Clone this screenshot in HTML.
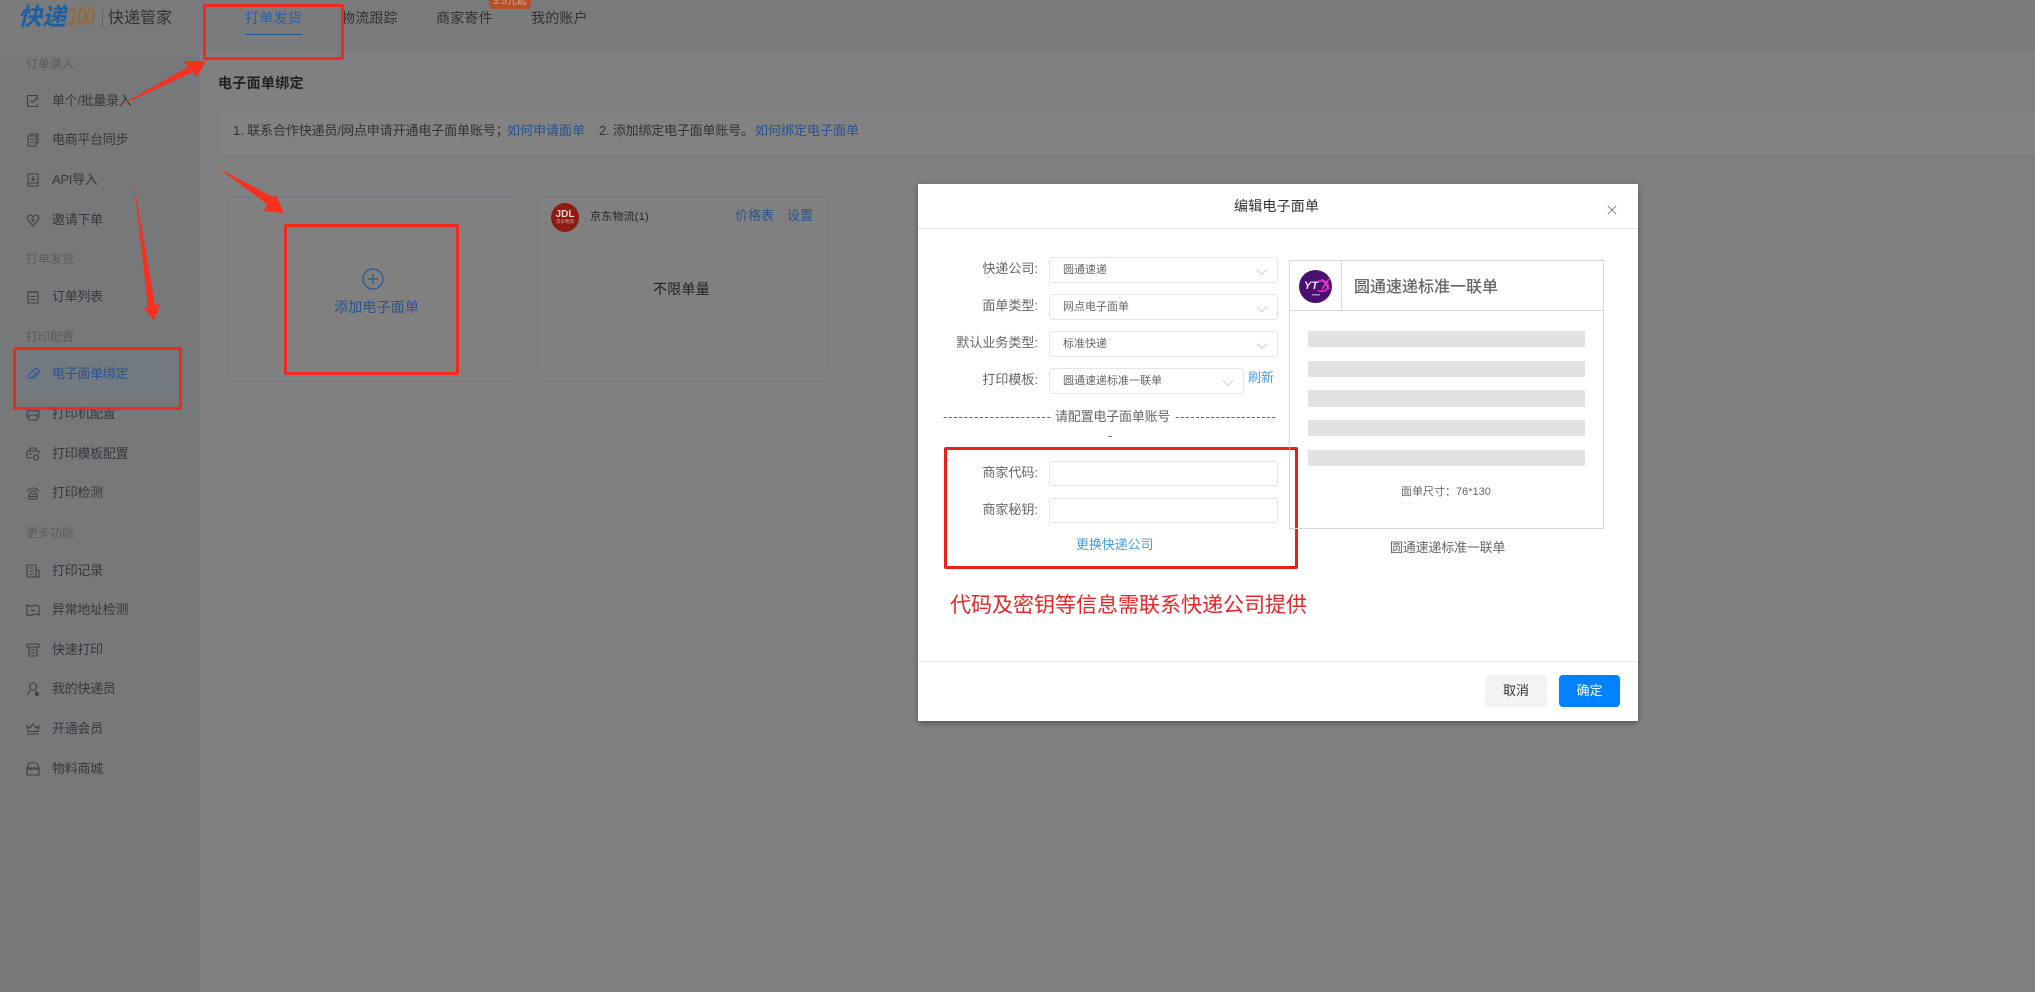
<!DOCTYPE html>
<html lang="zh-CN">
<head>
<meta charset="utf-8">
<title>电子面单绑定</title>
<style>
html,body{margin:0;padding:0;width:2035px;height:992px;overflow:hidden;background:#808080}
body{position:relative;font-family:"Liberation Sans","Noto Sans CJK SC",sans-serif;color:#333}
div,span,svg{position:absolute}
.t{white-space:nowrap;line-height:20px;height:20px}
.side{font-size:13px;color:#36383b;left:52px;letter-spacing:-.3px}
.sec{font-size:12px;color:#5a5c5f;left:26px}
.ic{left:26px;width:14px;height:14px;fill:none;stroke:#3e4043;stroke-width:1.1}
.tab{font-size:14px;color:#333;letter-spacing:.2px}
.blue{color:#27548f}
.box{box-sizing:border-box;border:1px solid #e6e6e6;border-radius:3px;background:#fff}
.lbl{font-size:13px;color:#666;right:997px;text-align:right}
.val{font-size:11px;color:#666;left:1063px}
.chev{width:12px;height:8px;fill:none;stroke:#cfcfcf;stroke-width:1}
.rb{box-sizing:border-box;border:3px solid #f0281e;border-radius:2px}
.bar{left:1308px;width:277px;background:#e2e2e2}
</style>
</head>
<body>
<!-- dimmed page -->
<div style="left:0;top:0;width:2035px;height:54px;background:#7a7b7c"></div>
<div style="left:0;top:54px;width:200px;height:938px;background:#76787a"></div>

<!-- logo -->
<div class="t" style="left:18px;top:6px;height:24px;line-height:24px;font-size:24px;font-weight:bold;font-style:italic;color:#1f5f9f">快递</div>
<div class="t" style="left:68px;top:5px;height:24px;line-height:24px;font-size:25px;font-weight:bold;font-style:italic;color:#8f6c3f;letter-spacing:-2px;transform:scaleX(.72);transform-origin:left center">100</div>
<div style="left:102px;top:10px;width:1px;height:17px;background:#5f6163"></div>
<div class="t" style="left:108px;top:9px;font-size:16px;color:#333">快递管家</div>

<!-- tabs -->
<div class="t tab" style="left:245px;top:8px;color:#2f5f9c">打单发货</div>
<div style="left:245px;top:34px;width:57px;height:1px;background:#27538f"></div>
<div class="t tab" style="left:341px;top:8px">物流跟踪</div>
<div class="t tab" style="left:436px;top:8px">商家寄件</div>
<div class="t tab" style="left:531px;top:8px">我的账户</div>
<div class="t" style="left:489px;top:-3px;width:42px;height:12px;line-height:10px;background:#b5502c;border-radius:0 0 4px 4px;color:#d9a98c;font-size:10px;text-align:center">3.5元起</div>

<!-- sidebar -->
<div style="left:16px;top:352px;width:162px;height:44px;background:#737980"></div>
<div class="t sec" style="top:54px">订单录入</div>
<svg class="ic" style="top:94px" viewBox="0 0 14 14"><path d="M11.500 5.500V1.500h-10v11h10v-2.500M4.500 6.500l2 2 5.500-5.500"/></svg>
<div class="t side" style="top:91px">单个/批量录入</div>
<svg class="ic" style="top:133px" viewBox="0 0 14 14"><path d="M4 3V1h8v9h-2M2 3h8v10H2zM4 6h4M4 9h4"/></svg>
<div class="t side" style="top:130px">电商平台同步</div>
<svg class="ic" style="top:173px" viewBox="0 0 14 14"><path d="M2 1h10v12H2zM2 10h10M7 3v4M5 5.500l2 2 2-2"/></svg>
<div class="t side" style="top:170px">API导入</div>
<svg class="ic" style="top:213px" viewBox="0 0 14 14"><path d="M7 13L1.500 6.500Q1 2 4 2q2 0 3 2 1-2 3-2 3 0 2.500 4.500zM5 6l3 1-2 2"/></svg>
<div class="t side" style="top:210px">邀请下单</div>
<div class="t sec" style="top:249px">打单发货</div>
<svg class="ic" style="top:290px" viewBox="0 0 14 14"><path d="M2 2h10v11H2zM5 1v2M9 1v2M4.500 6.500h5M4.500 9.500h5"/></svg>
<div class="t side" style="top:287px">订单列表</div>
<div class="t sec" style="top:327px">打印配置</div>
<svg class="ic" style="top:367px;stroke:#2a5490" viewBox="0 0 14 14"><path d="M11.500 5L6 10.500a2 2 0 0 1-3-3L9 2a3 3 0 0 1 4 4l-6 6"/></svg>
<div class="t side" style="top:364px;color:#27548f">电子面单绑定</div>
<svg class="ic" style="top:407px" viewBox="0 0 14 14"><path d="M3 4V1h8v3M1 4h12v6h-2M3 10H1V4M3 8h8v5H3z"/></svg>
<div class="t side" style="top:404px">打印机配置</div>
<svg class="ic" style="top:447px" viewBox="0 0 14 14"><path d="M4 4V1h6v3M1 11V4h12v3M1 11h5M3 7h3M10 8a2.500 2.500 0 1 0 .1 0z"/></svg>
<div class="t side" style="top:444px">打印模板配置</div>
<svg class="ic" style="top:486px" viewBox="0 0 14 14"><path d="M1 5Q7 -1 13 5M3.500 6.500Q7 3 10.500 6.500M3 8h8v5H3zM3 10.500h8"/></svg>
<div class="t side" style="top:483px">打印检测</div>
<div class="t sec" style="top:523px">更多功能</div>
<svg class="ic" style="top:564px" viewBox="0 0 14 14"><path d="M1 1h9v12H1zM10 6h3v7h-3M3.500 4h4M3.500 7h4M3.500 10h4"/></svg>
<div class="t side" style="top:561px">打印记录</div>
<svg class="ic" style="top:603px" viewBox="0 0 14 14"><path d="M1 2l4 1.500L9 2l4 1v9l-4-1-4 1.500L1 12zM5 6.500l2 1.500 2-1.500"/></svg>
<div class="t side" style="top:600px">异常地址检测</div>
<svg class="ic" style="top:643px" viewBox="0 0 14 14"><path d="M1 1h12v3H1zM3 4v9h8V4M5 7h4M5 10h4"/></svg>
<div class="t side" style="top:640px">快速打印</div>
<svg class="ic" style="top:682px" viewBox="0 0 14 14"><path d="M7 1a3.500 3.500 0 1 0 .1 0zM1.500 13Q2 9 5 8.500M9 8.500q1.500.5 2 1.500"/><circle cx="11" cy="12" r="1.500" fill="#3e4043"/></svg>
<div class="t side" style="top:679px">我的快递员</div>
<svg class="ic" style="top:722px" viewBox="0 0 14 14"><path d="M1 12h12M2 9.500L1 4l3 2 3-4 3 4 3-2-1 5.500z"/></svg>
<div class="t side" style="top:719px">开通会员</div>
<svg class="ic" style="top:762px" viewBox="0 0 14 14"><path d="M3 1h8l2 5v7H1V6zM1 6h12M1 6Q4 9 7 6q3 3 6 0"/></svg>
<div class="t side" style="top:759px">物料商城</div>

<!-- main content -->
<div class="t" style="left:218px;top:73px;font-size:14px;font-weight:bold;color:#222;letter-spacing:.3px">电子面单绑定</div>
<div style="left:218px;top:108px;width:1830px;height:48px;box-sizing:border-box;background:#828282;border:1px solid #7b7c7c;border-radius:3px;box-shadow:0 1px 2px #777"></div>
<div class="t" style="left:233px;top:121px;font-size:13px;color:#333;letter-spacing:-.1px">1. 联系合作快递员/网点申请开通电子面单账号；</div>
<div class="t blue" style="left:507px;top:121px;font-size:13px">如何申请面单</div>
<div class="t" style="left:599px;top:121px;font-size:13px;color:#333;letter-spacing:-.2px">2. 添加绑定电子面单账号。</div>
<div class="t blue" style="left:755px;top:121px;font-size:13px">如何绑定电子面单</div>

<div style="left:227px;top:197px;width:291px;height:180px;box-sizing:border-box;border:1px solid #6f7b8a;border-radius:4px"></div>
<div style="left:537px;top:197px;width:291px;height:180px;box-sizing:border-box;border:1px solid #76797e;border-radius:4px"></div>
<svg style="left:362px;top:268px;width:22px;height:22px" viewBox="0 0 22 22" fill="none" stroke="#27548f" stroke-width="1.2"><circle cx="11" cy="11" r="10"/><path d="M11 6v10M6 11h10"/></svg>
<div class="t blue" style="left:334px;top:297px;font-size:14px;letter-spacing:.2px">添加电子面单</div>

<svg style="left:551px;top:203px;width:28px;height:29px" viewBox="0 0 28 29"><ellipse cx="14" cy="14.500" rx="14" ry="14.500" fill="#8e1a12"/><text x="14" y="14" font-size="10" font-weight="bold" fill="#e8d9d6" text-anchor="middle" font-family="Liberation Sans,sans-serif">JDL</text><text x="14" y="20" font-size="4.500" fill="#d8b7b2" text-anchor="middle" font-family="Noto Sans CJK SC,sans-serif">京东物流</text></svg>
<div class="t" style="left:590px;top:207px;font-size:11px;color:#262626;letter-spacing:.2px">京东物流(1)</div>
<div class="t blue" style="left:735px;top:206px;font-size:13px">价格表</div>
<div class="t blue" style="left:787px;top:206px;font-size:13px">设置</div>
<div class="t" style="left:653px;top:279px;font-size:14px;color:#222;letter-spacing:.2px">不限单量</div>

<!-- annotations on page -->
<div class="rb" style="left:203px;top:4px;width:141px;height:56px"></div>
<div class="rb" style="left:13px;top:347px;width:169px;height:63px"></div>
<div class="rb" style="left:284px;top:224px;width:175px;height:151px"></div>
<svg style="left:0;top:0;width:400px;height:400px" viewBox="0 0 400 400" fill="#f5301f">
<path d="M119 106L188 67 184 61 206 61 197 77 193 72z"/>
<path d="M218 168L273 197 276 195 284 213 264 211 267 204z"/>
<path d="M134 183L148 307 144 308 154 321 160 304 155 305z"/>
</svg>

<!-- modal -->
<div style="left:918px;top:184px;width:720px;height:537px;background:#fff;box-shadow:0 2px 6px rgba(0,0,0,.35)"></div>
<div style="left:918px;top:228px;width:720px;height:1px;background:#e6e6e6"></div>
<div style="left:918px;top:661px;width:720px;height:1px;background:#e6e6e6"></div>
<div class="t" style="left:1234px;top:196px;font-size:14px;color:#333;letter-spacing:.2px">编辑电子面单</div>
<svg style="left:1607px;top:205px;width:10px;height:10px" viewBox="0 0 10 10" fill="none" stroke="#777" stroke-width=".9"><path d="M.8.800l8.400 8.400M9.200.800L.8 9.200"/></svg>

<div class="t lbl" style="top:259px">快递公司:</div>
<div class="box" style="left:1049px;top:257px;width:229px;height:26px"></div>
<div class="t val" style="top:260px">圆通速递</div>
<svg class="chev" style="left:1256px;top:268px" viewBox="0 0 12 8"><path d="M1 1.500l5 5 5-5"/></svg>

<div class="t lbl" style="top:296px">面单类型:</div>
<div class="box" style="left:1049px;top:294px;width:229px;height:26px"></div>
<div class="t val" style="top:297px">网点电子面单</div>
<svg class="chev" style="left:1256px;top:305px" viewBox="0 0 12 8"><path d="M1 1.500l5 5 5-5"/></svg>

<div class="t lbl" style="top:333px">默认业务类型:</div>
<div class="box" style="left:1049px;top:331px;width:229px;height:26px"></div>
<div class="t val" style="top:334px">标准快递</div>
<svg class="chev" style="left:1256px;top:342px" viewBox="0 0 12 8"><path d="M1 1.500l5 5 5-5"/></svg>

<div class="t lbl" style="top:370px">打印模板:</div>
<div class="box" style="left:1049px;top:368px;width:195px;height:26px"></div>
<div class="t val" style="top:371px">圆通速递标准一联单</div>
<svg class="chev" style="left:1222px;top:379px" viewBox="0 0 12 8"><path d="M1 1.500l5 5 5-5"/></svg>
<div class="t" style="left:1248px;top:368px;font-size:13px;color:#4a9be0">刷新</div>

<div class="t" style="left:943px;top:407px;font-size:13px;color:#666;letter-spacing:.85px">---------------------</div>
<div class="t" style="left:1055px;top:407px;font-size:13px;color:#666;letter-spacing:-.2px">请配置电子面单账号</div>
<div class="t" style="left:1175px;top:407px;font-size:13px;color:#666;letter-spacing:.75px">--------------------</div>
<div class="t" style="left:1108px;top:426px;font-size:13px;color:#666">-</div>

<div class="t lbl" style="top:463px">商家代码:</div>
<div class="box" style="left:1049px;top:461px;width:229px;height:25px"></div>
<div class="t lbl" style="top:500px">商家秘钥:</div>
<div class="box" style="left:1049px;top:498px;width:229px;height:25px"></div>
<div class="t" style="left:1076px;top:535px;font-size:13px;color:#4a9be0;letter-spacing:-.1px">更换快递公司</div>

<div class="rb" style="left:944px;top:447px;width:354px;height:122px;border-color:#ea1f17"></div>
<div class="t" style="left:950px;top:591px;height:30px;line-height:30px;font-size:21px;color:#e8262a">代码及密钥等信息需联系快递公司提供</div>

<!-- preview -->
<div style="left:1289px;top:260px;width:315px;height:269px;box-sizing:border-box;border:1px solid #d8d8d8"></div>
<div style="left:1289px;top:310px;width:315px;height:1px;background:#d8d8d8"></div>
<div style="left:1341px;top:260px;width:1px;height:51px;background:#d8d8d8"></div>
<svg style="left:1299px;top:270px;width:33px;height:33px" viewBox="0 0 33 33"><circle cx="16.500" cy="16.500" r="16.500" fill="#4a1070"/><text x="5" y="19" font-size="11" font-weight="bold" font-style="italic" fill="#f0e8f5" font-family="Liberation Sans,sans-serif">YT</text><path d="M19 11h5a5 5 0 0 1 0 10h-5" fill="none" stroke="#d62fc0" stroke-width="1.800"/><path d="M23 9l7 10M30 9l-7 10" fill="none" stroke="#e33fd0" stroke-width="1.500"/><rect x="13" y="24" width="8" height="1.500" fill="#a88bc0"/></svg>
<div class="t" style="left:1354px;top:278px;font-size:16px;color:#666;font-weight:500">圆通速递标准一联单</div>
<div class="bar" style="top:331px;height:16px"></div>
<div class="bar" style="top:361px;height:16px"></div>
<div class="bar" style="top:390px;height:17px"></div>
<div class="bar" style="top:420px;height:16px"></div>
<div class="bar" style="top:450px;height:16px"></div>
<div class="t" style="left:1401px;top:482px;font-size:11px;color:#666">面单尺寸：76*130</div>
<div class="t" style="left:1390px;top:538px;font-size:13px;color:#666;letter-spacing:-.2px">圆通速递标准一联单</div>

<div class="t" style="left:1485px;top:675px;width:62px;height:32px;line-height:32px;background:#f2f3f5;border-radius:4px;text-align:center;font-size:13px;color:#333">取消</div>
<div class="t" style="left:1559px;top:675px;width:61px;height:32px;line-height:32px;background:#0082ff;border-radius:4px;text-align:center;font-size:13px;color:#fff">确定</div>
</body>
</html>
